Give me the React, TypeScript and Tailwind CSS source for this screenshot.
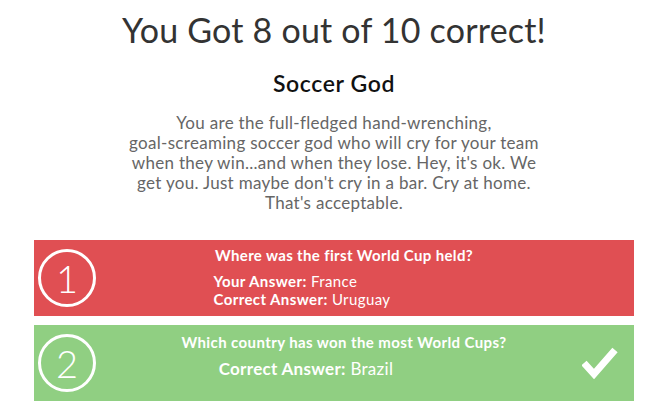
import React from "react";

function Circle({ n }: { n: number }) {
  return (
    <div className="w-[58px] h-[58px] rounded-full border-[3px] border-white flex items-center justify-center text-white text-[38px] font-light leading-none">
      {n}
    </div>
  );
}

export default function App() {
  return (
    <div
      className="w-[652px] h-[414px] bg-white overflow-hidden"
      style={{ fontFamily: "Lato, 'Open Sans', sans-serif" }}
    >
      <div className="ml-[34px] w-[600px] flex flex-col items-center">
        <h1 className="mt-[10px] text-[34px] leading-[40px] text-[#333333] font-normal tracking-[0.2px]">
          You Got 8 out of 10 correct!
        </h1>
        <h2 className="mt-[20px] text-[23px] leading-[27px] font-semibold text-[#111111] tracking-[0.6px]">
          Soccer God
        </h2>
        <p className="mt-[16px] text-[17px] leading-[20px] text-[#666666] text-center tracking-[0.3px]">
          You are the full-fledged hand-wrenching,
          <br />
          goal-screaming soccer god who will cry for your team
          <br />
          when they win...and when they lose. Hey, it's ok. We
          <br />
          get you. Just maybe don't cry in a bar. Cry at home.
          <br />
          That's acceptable.
        </p>
      </div>

      <div className="ml-[34px] w-[600px] mt-[27px] flex flex-col gap-[9px]">
        <div className="h-[76px] bg-[#e04f53] flex items-start text-white">
          <div className="w-[100px] self-center pl-[4px]">
            <Circle n={1} />
          </div>
          <div className="flex-1 pt-[6px] text-center">
            <div className="text-[15px] leading-[18px] font-bold tracking-[0.35px]">
              Where was the first World Cup held?
            </div>
            <div className="mt-[8px] inline-block text-left mr-[84px] text-[15px] leading-[18px] tracking-[0.4px]">
              <div>
                <span className="font-bold">Your Answer:</span> France
              </div>
              <div>
                <span className="font-bold">Correct Answer:</span> Uruguay
              </div>
            </div>
          </div>
          <div className="w-[80px]" />
        </div>

        <div className="h-[76px] bg-[#90cf82] flex items-start text-white">
          <div className="w-[100px] self-center pl-[4px]">
            <Circle n={2} />
          </div>
          <div className="flex-1 pt-[8px] text-center">
            <div className="text-[15px] leading-[18px] font-bold tracking-[0.4px]">
              Which country has won the most World Cups?
            </div>
            <div className="mt-[8px] inline-block text-left mr-[76px] text-[17px] leading-[20px] tracking-[0.3px]">
              <span className="font-bold">Correct Answer:</span> Brazil
            </div>
          </div>
          <div className="w-[80px] self-center pl-[28px]">
            <svg width="36" height="32" viewBox="0 0 36 32">
              <polyline
                points="2,16 12,27 33,3"
                fill="none"
                stroke="white"
                strokeWidth="7"
              />
            </svg>
          </div>
        </div>
      </div>
    </div>
  );
}
